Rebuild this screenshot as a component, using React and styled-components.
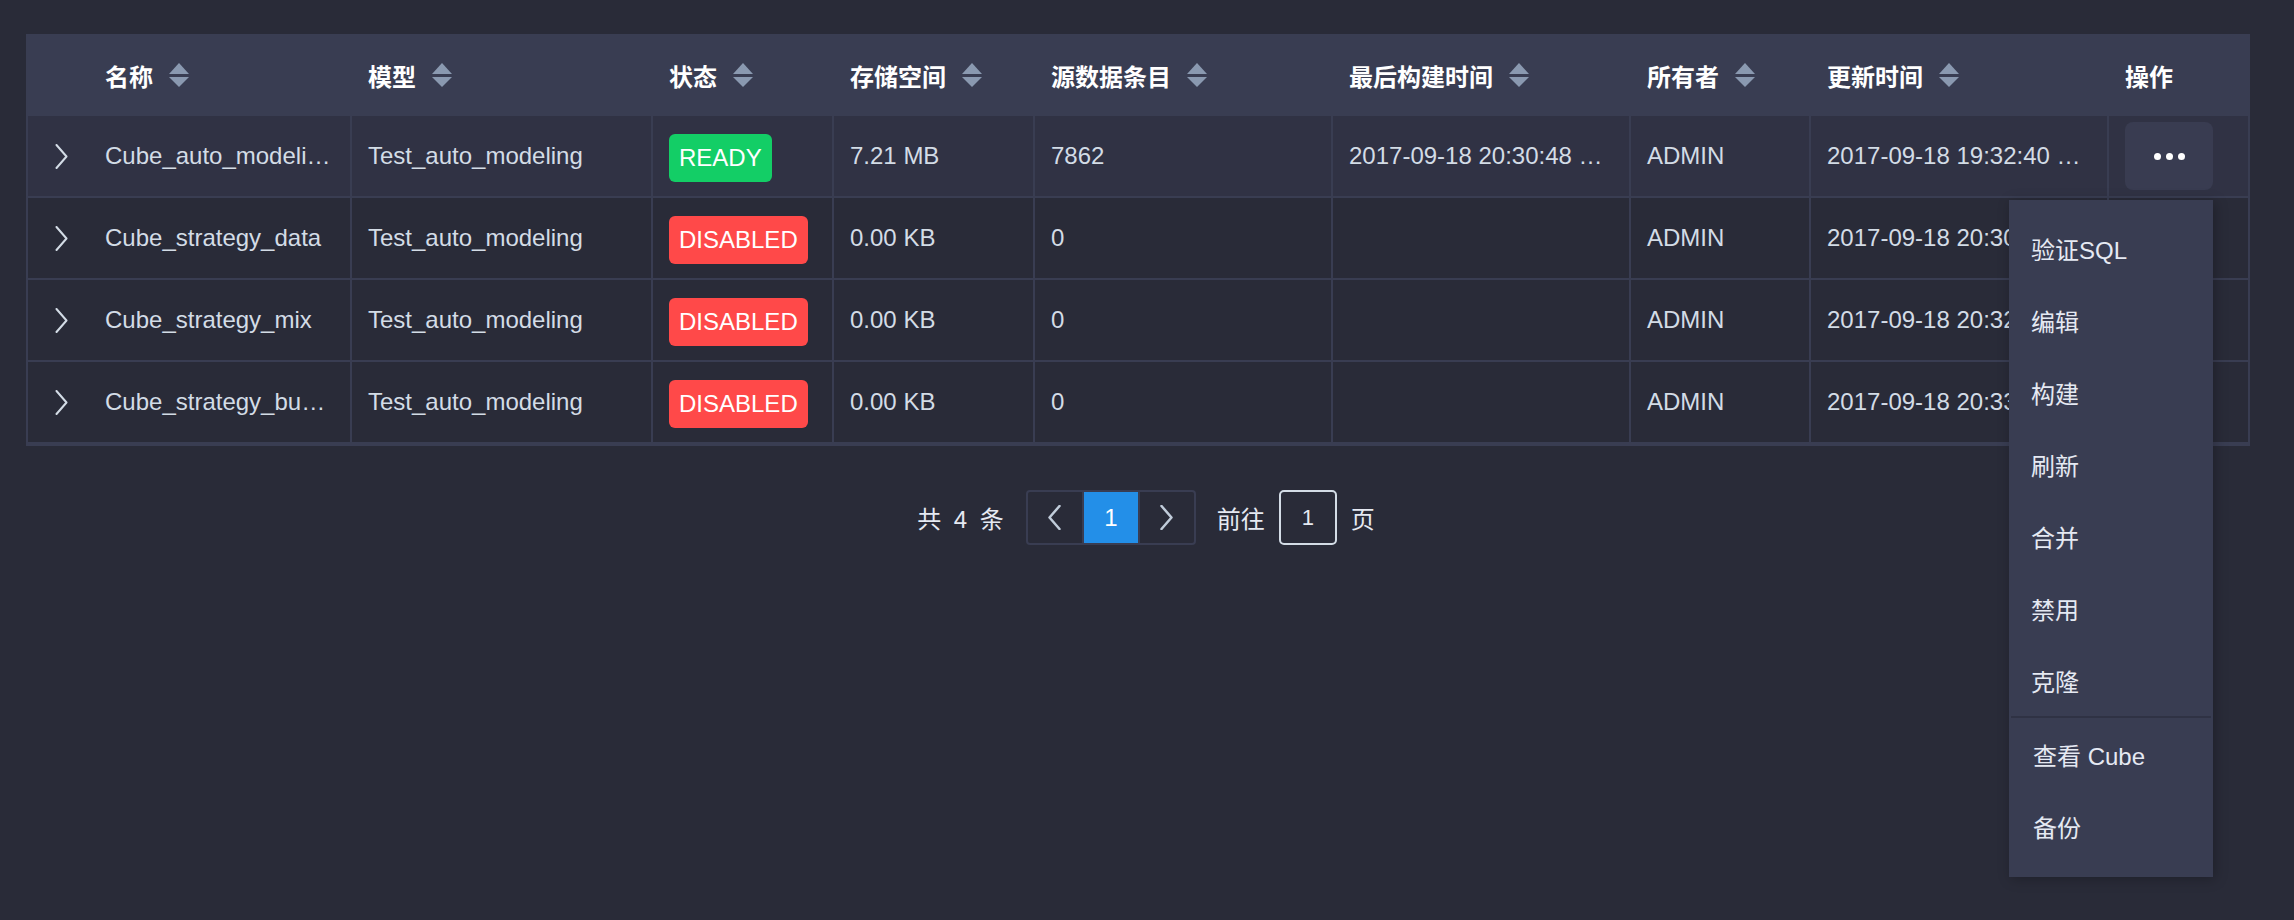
import React from 'react';
import styled, { createGlobalStyle } from 'styled-components';

const c = {
  page: '#292b38',
  head: '#393d52',
  line: '#393d52',
  rowHi: '#303244',
  text: '#d3dce6',
  white: '#ffffff',
  sort: '#8a99b0',
  green: '#13ce66',
  red: '#ff4949',
  blue: '#238fe8',
};

const font = `"Liberation Sans", "Noto Sans CJK SC", sans-serif`;
const cols = '61px 263px 301px 181px 201px 298px 298px 180px 298px 139px';

const GlobalStyle = createGlobalStyle`
  html, body {
    margin: 0;
    background: ${c.page};
    font-family: ${font};
  }
`;

const columns = [
  { key: 'name', label: '名称', sort: true },
  { key: 'model', label: '模型', sort: true },
  { key: 'status', label: '状态', sort: true },
  { key: 'size', label: '存储空间', sort: true },
  { key: 'source', label: '源数据条目', sort: true },
  { key: 'built', label: '最后构建时间', sort: true },
  { key: 'owner', label: '所有者', sort: true },
  { key: 'updated', label: '更新时间', sort: true },
  { key: 'action', label: '操作', sort: false },
];

const rows = [
  {
    name: 'Cube_auto_modeling_test',
    model: 'Test_auto_modeling',
    status: 'READY',
    size: '7.21 MB',
    source: '7862',
    built: '2017-09-18 20:30:48 GMT+8',
    owner: 'ADMIN',
    updated: '2017-09-18 19:32:40 GMT+8',
  },
  {
    name: 'Cube_strategy_data',
    model: 'Test_auto_modeling',
    status: 'DISABLED',
    size: '0.00 KB',
    source: '0',
    built: '',
    owner: 'ADMIN',
    updated: '2017-09-18 20:30:12 GMT+8',
  },
  {
    name: 'Cube_strategy_mix',
    model: 'Test_auto_modeling',
    status: 'DISABLED',
    size: '0.00 KB',
    source: '0',
    built: '',
    owner: 'ADMIN',
    updated: '2017-09-18 20:32:05 GMT+8',
  },
  {
    name: 'Cube_strategy_business',
    model: 'Test_auto_modeling',
    status: 'DISABLED',
    size: '0.00 KB',
    source: '0',
    built: '',
    owner: 'ADMIN',
    updated: '2017-09-18 20:33:21 GMT+8',
  },
];

const menuGroups = [
  ['验证SQL', '编辑', '构建', '刷新', '合并', '禁用', '克隆'],
  ['查看 Cube', '备份'],
];

const SortIcon = () => (
  <svg width="20" height="24" viewBox="0 0 20 24">
    <polygon points="0,11 10,0 20,11" fill={c.sort} />
    <polygon points="0,14 20,14 10,24" fill={c.sort} />
  </svg>
);

const Chevron = ({ dir = 'right', stroke = 2, color = c.text }) => (
  <svg width="13" height="25" viewBox="0 0 13 25">
    <polyline
      points={dir === 'right' ? '1.5,1 11.5,12.5 1.5,24' : '11.5,1 1.5,12.5 11.5,24'}
      fill="none"
      stroke={color}
      strokeWidth={stroke}
      strokeLinecap="round"
      strokeLinejoin="round"
    />
  </svg>
);

const App = () => {
  return (
    <Page>
      <GlobalStyle />
      <Table>
        <HeadRow>
          <HeadCell />
          {columns.map((col) => (
            <HeadCell key={col.key}>
              <span>{col.label}</span>
              {col.sort && <SortIcon />}
            </HeadCell>
          ))}
        </HeadRow>
        {rows.map((row, i) => (
          <Row key={row.name} $active={i === 0}>
            <ExpandCell>
              <Chevron />
            </ExpandCell>
            <Cell>{row.name}</Cell>
            <Cell>{row.model}</Cell>
            <Cell>
              <Tag $ok={row.status === 'READY'}>{row.status}</Tag>
            </Cell>
            <Cell>{row.size}</Cell>
            <Cell>{row.source}</Cell>
            <Cell>{row.built}</Cell>
            <Cell>{row.owner}</Cell>
            <Cell>{row.updated}</Cell>
            <ActionCell>
              <MoreButton>
                <Dot />
                <Dot />
                <Dot />
              </MoreButton>
              {i === 0 && (
                <Menu>
                  {menuGroups.map((group, g) => (
                    <MenuGroup key={g} $divided={g > 0}>
                      {group.map((item) => (
                        <MenuItem key={item}>{item}</MenuItem>
                      ))}
                    </MenuGroup>
                  ))}
                </Menu>
              )}
            </ActionCell>
          </Row>
        ))}
      </Table>

      <Pagination>
        <Total>共 4 条</Total>
        <Pager>
          <PageBtn>
            <Chevron dir="left" stroke={2.5} color="#c0ccda" />
          </PageBtn>
          <PageBtn $current>1</PageBtn>
          <PageBtn>
            <Chevron dir="right" stroke={2.5} color="#c0ccda" />
          </PageBtn>
        </Pager>
        <PagerText>前往</PagerText>
        <JumpInput>1</JumpInput>
        <PagerText>页</PagerText>
      </Pagination>
    </Page>
  );
};

export default App;

const Page = styled.div`
  min-height: 920px;
  box-sizing: border-box;
  padding: 34px 44px 0 26px;
  background: ${c.page};
  font-family: ${font};
`;

const Table = styled.div`
  border: 2px solid ${c.line};
  border-top: none;
  background: ${c.page};
`;

const HeadRow = styled.div`
  display: grid;
  grid-template-columns: ${cols};
  height: 82px;
  margin: 0 -2px;
  padding: 0 2px;
  background: ${c.head};
`;

const HeadCell = styled.div`
  display: flex;
  align-items: center;
  gap: 16px;
  padding: 0 16px;
  color: ${c.white};
  font-size: 24px;
  font-weight: 700;
  white-space: nowrap;
`;

const Row = styled.div`
  display: grid;
  grid-template-columns: ${cols};
  height: 82px;
  background: ${(p) => (p.$active ? c.rowHi : c.page)};
`;

const Cell = styled.div`
  display: block;
  min-width: 0;
  padding: 0 16px;
  border-right: 2px solid ${c.line};
  border-bottom: 2px solid ${c.line};
  color: ${c.text};
  font-size: 24px;
  line-height: 80px;
  white-space: nowrap;
  overflow: hidden;
  text-overflow: ellipsis;
`;

const ExpandCell = styled.div`
  display: flex;
  align-items: center;
  padding-left: 27px;
  border-bottom: 2px solid ${c.line};
`;

const ActionCell = styled.div`
  position: relative;
  display: flex;
  align-items: center;
  padding: 0 16px;
  border-bottom: 2px solid ${c.line};
`;

const Tag = styled.span`
  display: inline-flex;
  align-items: center;
  height: 48px;
  padding: 0 10px;
  border-radius: 6px;
  vertical-align: middle;
  background: ${(p) => (p.$ok ? c.green : c.red)};
  color: ${c.white};
  font-size: 24px;
  line-height: 48px;
`;

const MoreButton = styled.div`
  display: flex;
  align-items: center;
  justify-content: center;
  gap: 5px;
  width: 88px;
  height: 68px;
  border-radius: 8px;
  background: #393c51;
`;

const Dot = styled.span`
  width: 7px;
  height: 7px;
  border-radius: 50%;
  background: ${c.white};
`;

const Menu = styled.div`
  position: absolute;
  top: 84px;
  right: 35px;
  z-index: 10;
  width: 204px;
  padding: 12px 0 15px;
  background: ${c.head};
  box-shadow: 2px 2px 12px rgba(0, 0, 0, 0.25);
`;

const MenuGroup = styled.div`
  border-top: ${(p) => (p.$divided ? '2px solid #2f3244' : 'none')};
  margin: ${(p) => (p.$divided ? '0 2px' : '0')};
`;

const MenuItem = styled.div`
  height: 72px;
  padding-left: 22px;
  display: flex;
  align-items: center;
  color: #e5e9f2;
  font-size: 24px;
  white-space: nowrap;
`;

const Pagination = styled.div`
  display: flex;
  align-items: center;
  justify-content: center;
  margin-top: 44px;
  padding-left: 30px;
`;

const PagerText = styled.span`
  margin: 0 14px;
  color: #e5e9f2;
  font-size: 24px;
  white-space: nowrap;
`;

const Total = styled(PagerText)`
  margin: 0 22px 0 0;
  word-spacing: 6px;
`;

const Pager = styled.div`
  display: flex;
  height: 55px;
  box-sizing: border-box;
  border: 2px solid ${c.line};
  border-radius: 4px;
  margin-right: 7px;
`;

const PageBtn = styled.div`
  display: flex;
  align-items: center;
  justify-content: center;
  width: 54px;
  background: ${(p) => (p.$current ? c.blue : 'transparent')};
  color: ${c.white};
  font-size: 24px;
  & + & {
    border-left: 2px solid ${c.line};
  }
`;

const JumpInput = styled.div`
  display: flex;
  align-items: center;
  justify-content: center;
  width: 58px;
  height: 55px;
  box-sizing: border-box;
  border: 2px solid #d3dce6;
  border-radius: 5px;
  color: #e5e9f2;
  font-size: 22px;
`;
